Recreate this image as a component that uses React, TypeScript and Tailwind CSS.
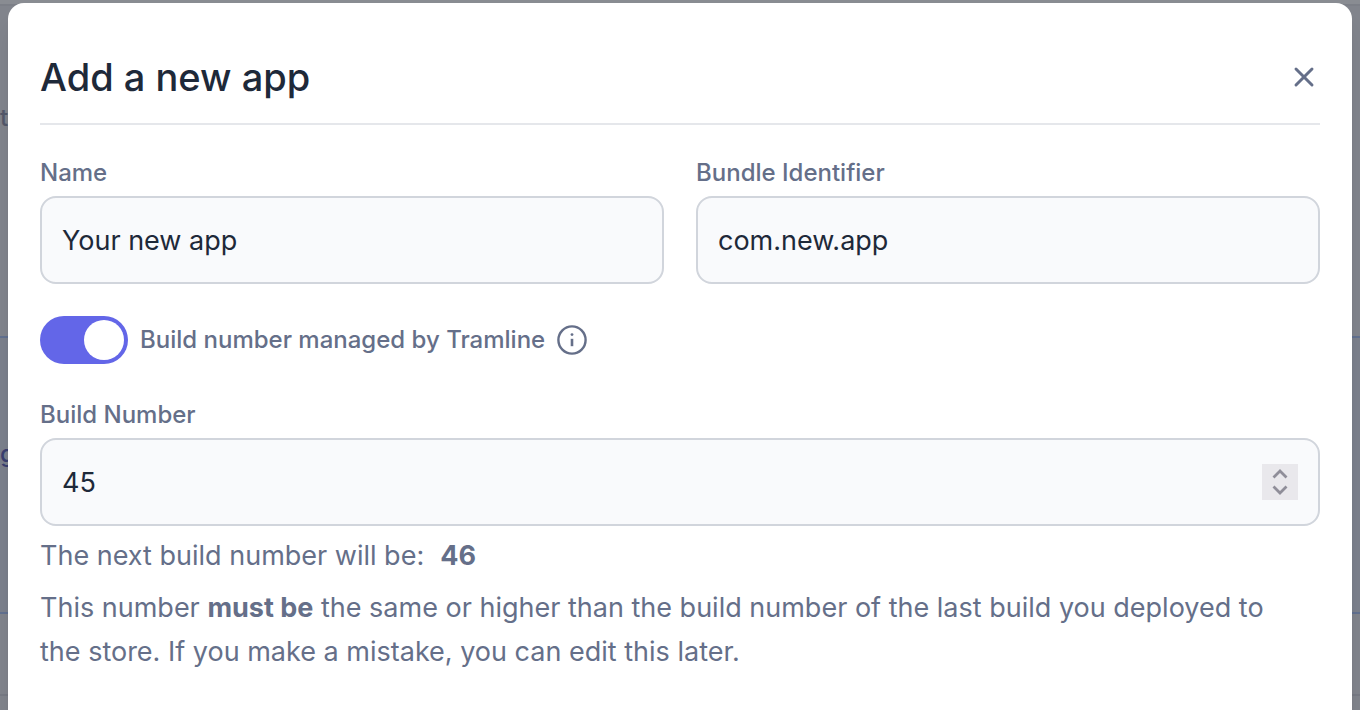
import { useState, type ReactNode } from "react";
import { X } from "lucide-react";

const inputClass =
  "block h-22 w-full rounded-2xl border-2 border-gray-300 bg-[#f9fafc] px-5 text-[27px] text-gray-800 outline-none focus:border-indigo-400";

function Field({
  id,
  label,
  children,
}: {
  id: string;
  label: string;
  children: ReactNode;
}) {
  return (
    <div className="min-w-0 flex-1">
      <label
        htmlFor={id}
        className="mb-2 block text-2xl leading-[31px] font-medium text-[#656f89]"
      >
        {label}
      </label>
      {children}
    </div>
  );
}

function InfoIcon() {
  return (
    <svg
      viewBox="0 0 30 30"
      fill="none"
      stroke="currentColor"
      strokeWidth="2.4"
      className="size-[30px]"
      aria-hidden="true"
    >
      <circle cx="15" cy="15" r="13.6" />
      <path d="M15 13.8v7.4" strokeWidth="2.6" />
      <circle cx="15" cy="9.6" r="1.4" fill="currentColor" stroke="none" />
    </svg>
  );
}

function Chevron({ d }: { d: string }) {
  return (
    <svg
      viewBox="0 0 36 18"
      fill="none"
      stroke="currentColor"
      strokeWidth="2.8"
      className="h-[18px] w-9"
      aria-hidden="true"
    >
      <path d={d} />
    </svg>
  );
}

/* Dimmed page behind the modal */
function Backdrop() {
  return (
    <div
      className="absolute inset-0 flex flex-col bg-[#81848c] text-2xl font-medium"
      aria-hidden="true"
    >
      <div className="h-1 bg-[#898c92]" />
      <div className="h-[332px] border-t-2 border-[#7c7f87] pt-24 text-[#53586a]">
        t
      </div>
      <div className="h-[278px] border-y-2 border-[#627190] bg-[#7b808c] pt-[100px] text-[#3a3f70]">
        g
      </div>
      <div className="h-[82px] border-b-2 border-[#777a84]" />
    </div>
  );
}

export default function App() {
  const [name, setName] = useState("Your new app");
  const [bundle, setBundle] = useState("com.new.app");
  const [managed, setManaged] = useState(true);
  const [build, setBuild] = useState(45);

  return (
    <div className="relative h-screen overflow-hidden font-['Inter',sans-serif]">
      <Backdrop />

      <div
        role="dialog"
        aria-labelledby="modal-title"
        className="relative mx-2 mt-[3px] min-h-screen rounded-t-2xl bg-white px-8 pt-11 shadow-xl"
      >
        <header className="flex items-center justify-between border-b-2 border-gray-200 pb-4">
          <h1
            id="modal-title"
            className="text-[38px] leading-[60px] font-medium text-gray-800"
          >
            Add a new app
          </h1>
          <button type="button" aria-label="Close" className="text-[#656f89]">
            <X className="size-8" strokeWidth={2.2} />
          </button>
        </header>

        <form className="pt-8" onSubmit={(e) => e.preventDefault()}>
          <div className="flex gap-8">
            <Field id="app-name" label="Name">
              <input
                id="app-name"
                type="text"
                value={name}
                onChange={(e) => setName(e.target.value)}
                className={inputClass}
              />
            </Field>
            <Field id="bundle-id" label="Bundle Identifier">
              <input
                id="bundle-id"
                type="text"
                value={bundle}
                onChange={(e) => setBundle(e.target.value)}
                className={inputClass}
              />
            </Field>
          </div>

          <div className="mt-8 mb-[35px] flex items-center gap-3 text-[#656f89]">
            <input
              id="managed"
              type="checkbox"
              role="switch"
              checked={managed}
              onChange={(e) => setManaged(e.target.checked)}
              className="flex h-12 w-22 shrink-0 cursor-pointer appearance-none items-center rounded-full bg-gray-300 px-1 before:size-10 before:rounded-full before:bg-white checked:justify-end checked:bg-[#6366e8]"
            />
            <label htmlFor="managed" className="text-2xl font-medium">
              Build number managed by Tramline
            </label>
            <InfoIcon />
          </div>

          <Field id="build-number" label="Build Number">
            <div className="relative">
              <input
                id="build-number"
                type="text"
                inputMode="numeric"
                value={build}
                onChange={(e) => setBuild(Number(e.target.value) || 0)}
                className={inputClass}
              />
              <div className="absolute inset-y-0 right-[22px] my-auto h-9 w-9 bg-[#e9e8ec] text-[#8f8e99]">
                <button
                  type="button"
                  aria-label="Increase"
                  className="block"
                  onClick={() => setBuild(build + 1)}
                >
                  <Chevron d="M11.5 13.5 18 7l6.5 6.5" />
                </button>
                <button
                  type="button"
                  aria-label="Decrease"
                  className="block"
                  onClick={() => setBuild(build - 1)}
                >
                  <Chevron d="M11.5 4.5 18 11l6.5-6.5" />
                </button>
              </div>
            </div>
          </Field>

          <div className="mt-2 space-y-2 pr-6 text-[27px] leading-11 text-[#656f89]">
            <p>
              The next build number will be:
              <strong className="ml-4 font-bold">{build + 1}</strong>
            </p>
            <p>
              This number <strong className="font-bold">must be</strong> the
              same or higher than the build number of the last build you
              deployed to the store. If you make a mistake, you can edit this
              later.
            </p>
          </div>
        </form>
      </div>
    </div>
  );
}
